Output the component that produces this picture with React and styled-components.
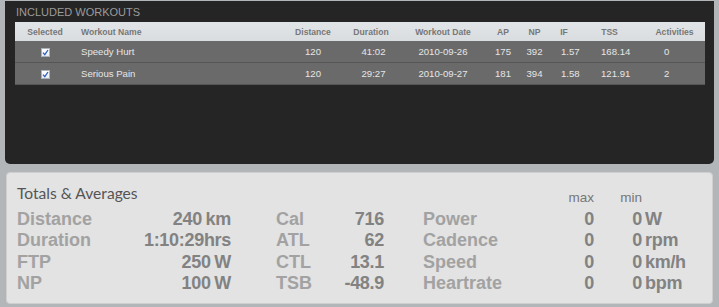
import React from 'react';
import styled, { createGlobalStyle } from 'styled-components';

const GlobalStyle = createGlobalStyle`
  html, body {
    margin: 0;
    padding: 0;
    background: #b3b6b8;
    font-family: "Liberation Sans", Arial, sans-serif;
  }
`;

const Page = styled.div`
  display: flex;
  flex-direction: column;
  gap: 8px;
  padding: 1px 5px 0 5px;
  width: 719px;
  box-sizing: border-box;
`;

const DarkPanel = styled.div`
  height: 163px;
  background: #252525;
  border-radius: 0 0 5px 5px;
  padding: 0 9px 0 10px;
  box-sizing: border-box;
`;

const PanelHeading = styled.div`
  font-size: 11px;
  line-height: 21px;
  padding-top: 1px;
  height: 21px;
  box-sizing: border-box;
  color: #9b9b9b;
  text-transform: uppercase;
  padding-left: 1px;
`;

const Table = styled.table`
  width: 690px;
  table-layout: fixed;
  border-collapse: collapse;
  font-family: "Liberation Sans", Arial, sans-serif;
`;

const HeadCell = styled.th`
  height: 19px;
  padding: 0 0 0 ${p => p.$pad || 0}px;
  background: linear-gradient(#e2e5e8, #d9dde0);
  color: #777;
  font-size: 8.6px;
  font-weight: bold;
  text-align: ${p => p.$align || 'center'};
  white-space: nowrap;
`;

const Row = styled.tr`
  background: #6a6a6a;
  border-bottom: 1px solid #565656;
`;

const Cell = styled.td`
  height: 21px;
  padding: 0 0 0 ${p => p.$pad || 0}px;
  color: #e6e6e6;
  font-size: 9.6px;
  text-align: ${p => p.$align || 'center'};
  white-space: nowrap;
`;

const Check = styled.span`
  display: inline-flex;
  align-items: center;
  justify-content: center;
  width: 7px;
  height: 7px;
  background: linear-gradient(#ffffff, #e8ecf2);
  border: 1px solid #a9b1ba;
  vertical-align: middle;
  svg { display: block; }
`;

const LightPanel = styled.div`
  margin: 0 1px;
  height: 132px;
  background: #e3e3e3;
  border: 1px solid #cfcfcf;
  border-radius: 4px;
  box-sizing: border-box;
  padding: 12px 0 0 10px;
`;

const StatsGrid = styled.div`
  display: grid;
  grid-template-columns: 93px 121px 99px 54px 146px 64px 48px auto;
  grid-template-rows: 24px repeat(4, 21.4px);
  font-weight: bold;
  font-size: 18px;
`;

const Title = styled.div`
  grid-column: 1 / 6;
  font-family: Lato, "Open Sans", sans-serif;
  font-weight: 400;
  font-size: 15.6px;
  line-height: 16px;
  color: #555;
`;

const ColHead = styled.div`
  align-self: end;
  margin-bottom: 4px;
  text-align: right;
  font-weight: normal;
  font-size: 13.5px;
  line-height: 14px;
  color: #777;
`;

const Label = styled.div`
  line-height: 21.4px;
  color: #a2a2a2;
  padding-left: ${p => p.$pad || 0}px;
  white-space: nowrap;
`;

const Value = styled.div`
  line-height: 21.4px;
  color: #828282;
  text-align: ${p => p.$align || 'right'};
  padding-left: ${p => p.$pad || 0}px;
  white-space: nowrap;
  letter-spacing: -0.3px;
  word-spacing: -1px;
`;

const columns = [
  { key: 'sel', title: 'Selected', w: 60 },
  { key: 'name', title: 'Workout Name', w: 205, align: 'left', pad: 6, headAlign: 'left', headPad: 6 },
  { key: 'dist', title: 'Distance', w: 66 },
  { key: 'dur', title: 'Duration', w: 50, pad: 5 },
  { key: 'date', title: 'Workout Date', w: 94 },
  { key: 'ap', title: 'AP', w: 26 },
  { key: 'np', title: 'NP', w: 37 },
  { key: 'if', title: 'IF', w: 22, align: 'left', pad: 8 },
  { key: 'tss', title: 'TSS', w: 69, align: 'left', pad: 26 },
  { key: 'act', title: 'Activities', w: 61, align: 'left', pad: 20 },
];

const workouts = [
  { name: 'Speedy Hurt', dist: '120', dur: '41:02', date: '2010-09-26', ap: '175', np: '392', if: '1.57', tss: '168.14', act: '0' },
  { name: 'Serious Pain', dist: '120', dur: '29:27', date: '2010-09-27', ap: '181', np: '394', if: '1.58', tss: '121.91', act: '2' },
];

const stats = [
  ['Distance', '240 km', 'Cal', '716', 'Power', 'W'],
  ['Duration', '1:10:29hrs', 'ATL', '62', 'Cadence', 'rpm'],
  ['FTP', '250 W', 'CTL', '13.1', 'Speed', 'km/h'],
  ['NP', '100 W', 'TSB', '-48.9', 'Heartrate', 'bpm'],
];

const CheckMark = () => (
  <Check>
    <svg width="7" height="7" viewBox="0 0 7 7">
      <path d="M1 3.6 L2.8 5.6 L6 1" fill="none" stroke="#2f5fc4" strokeWidth="1.3" />
    </svg>
  </Check>
);

const App = () => (
  <>
    <GlobalStyle />
    <Page>
      <DarkPanel>
        <PanelHeading>Included Workouts</PanelHeading>
        <Table>
          <colgroup>
            {columns.map(c => <col key={c.key} style={{ width: c.w }} />)}
          </colgroup>
          <thead>
            <tr>
              {columns.map(c => (
                <HeadCell key={c.key} $align={c.headAlign} $pad={c.headPad}>{c.title}</HeadCell>
              ))}
            </tr>
          </thead>
          <tbody>
            {workouts.map(w => (
              <Row key={w.name}>
                {columns.map(c => (
                  <Cell key={c.key} $align={c.align} $pad={c.pad}>
                    {c.key === 'sel' ? <CheckMark /> : w[c.key]}
                  </Cell>
                ))}
              </Row>
            ))}
          </tbody>
        </Table>
      </DarkPanel>
      <LightPanel>
        <StatsGrid>
          <Title>Totals &amp; Averages</Title>
          <ColHead>max</ColHead>
          <ColHead>min</ColHead>
          <div />
          {stats.map(s => (
            <React.Fragment key={s[0]}>
              <Label>{s[0]}</Label>
              <Value>{s[1]}</Value>
              <Label $pad={45}>{s[2]}</Label>
              <Value>{s[3]}</Value>
              <Label $pad={39}>{s[4]}</Label>
              <Value>0</Value>
              <Value>0</Value>
              <Value $align="left" $pad={3}>{s[5]}</Value>
            </React.Fragment>
          ))}
        </StatsGrid>
      </LightPanel>
    </Page>
  </>
);

export default App;
